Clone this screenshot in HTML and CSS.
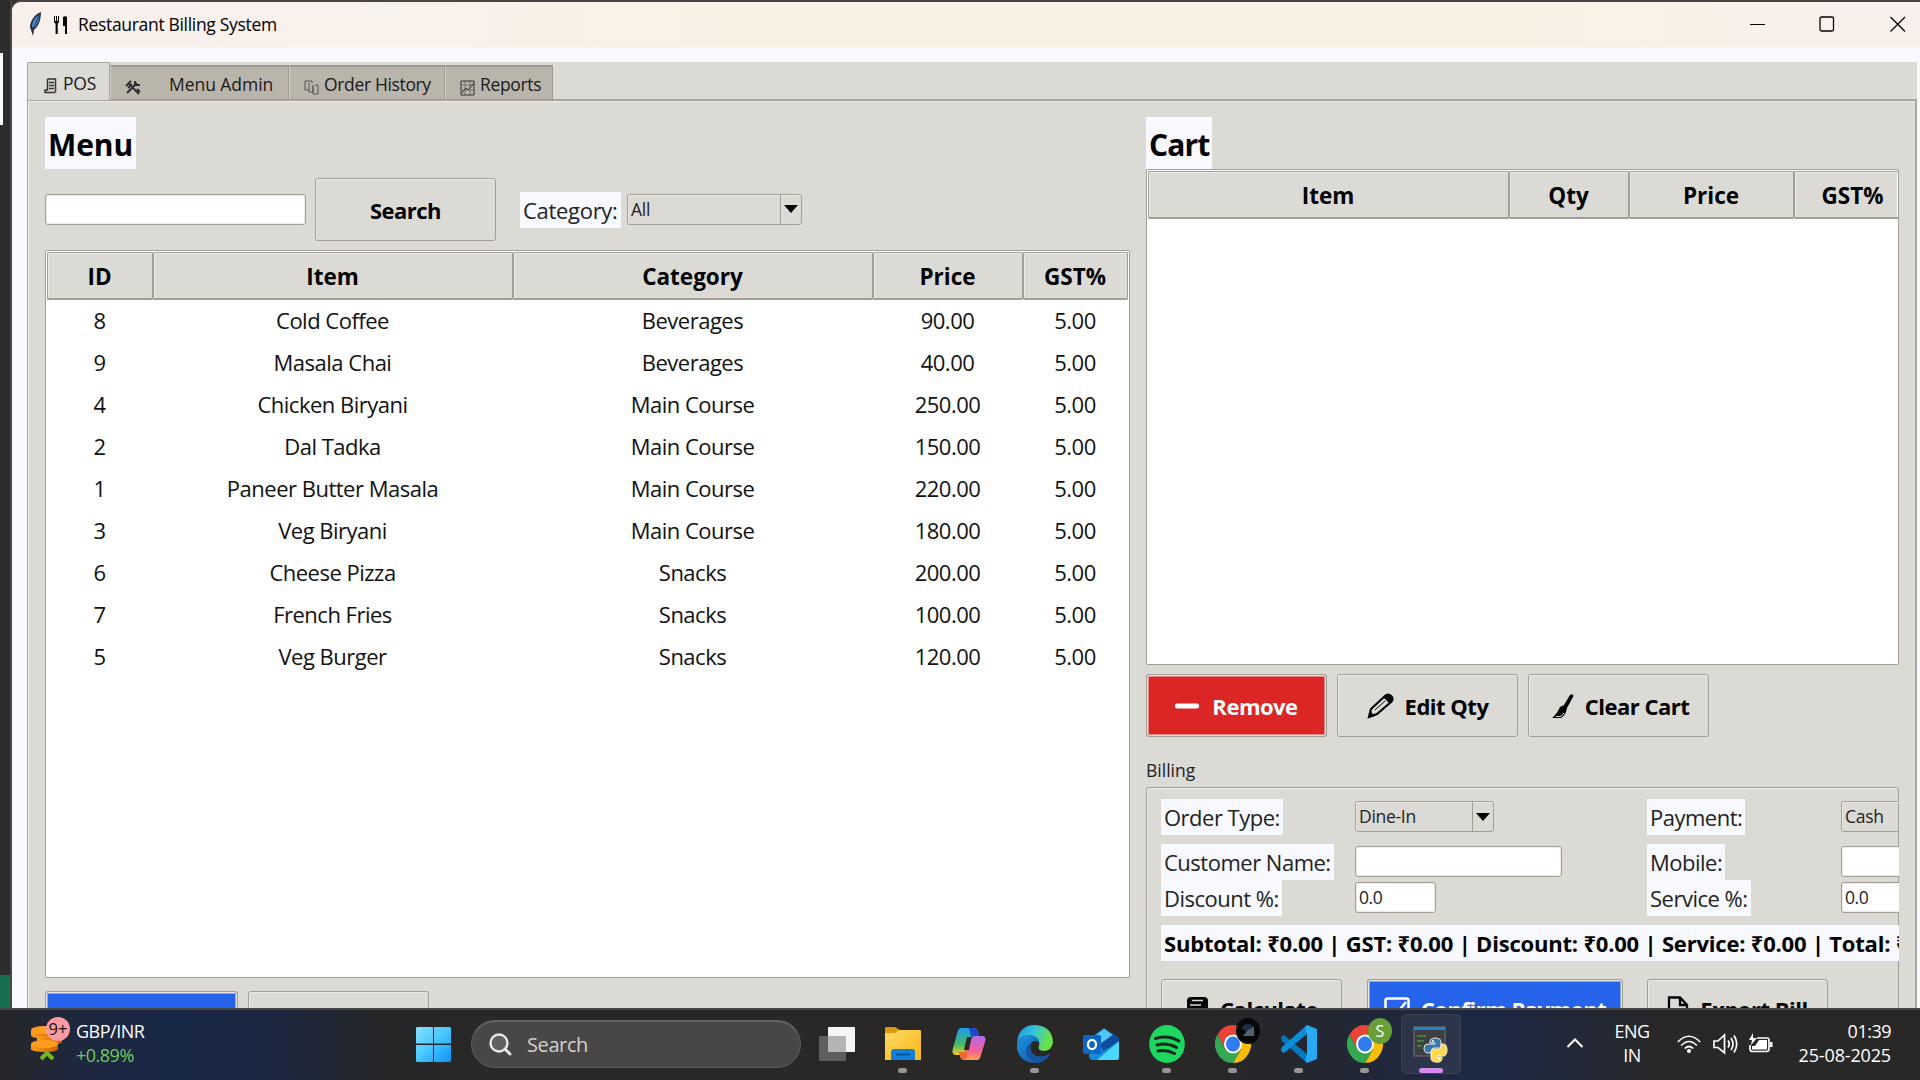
FILE: index.html
```html
<!DOCTYPE html>
<html lang="en">
<head>
<meta charset="utf-8">
<title>Restaurant Billing System</title>
<link rel="stylesheet" href="styles.css">
</head>
<body>
<svg width="0" height="0" class="defs">
  <defs>
    <symbol id="chrome" viewBox="0 0 36 38">
      <path d="M18 0A18 19 0 0 0 2.4 9.5L10 24 18 19 18 9.5H33.6A18 19 0 0 0 18 0Z" fill="#ea4335"/>
      <path d="M33.6 9.5H18L26 24 18 38A18 19 0 0 0 33.6 9.5Z" fill="#fbbc05"/>
      <path d="M2.4 9.5A18 19 0 0 0 18 38L26 24 18 28.5 10 24Z" fill="#34a853"/>
      <ellipse cx="18" cy="19" rx="9" ry="9.5" fill="#fff"/>
      <ellipse cx="18" cy="19" rx="7" ry="7.5" fill="#2f7bf0"/>
    </symbol>
  </defs>
</svg>
<div class="desktop">
  <div class="strip"><i class="strip-light"></i><i class="strip-green"></i></div>
  <div class="window">
    <header class="titlebar">
      <svg class="feather" width="14" height="24" viewBox="0 0 14 24"><path d="M13 0C7 2 2 9 2 15L3 18 5 24 6 18C11 14 13 7 13 0Z" fill="#26313f"/><path d="M11.500 2.500C7 5 4 10 4 15L6 16C10 12 11 7 11.500 2.500Z" fill="#4c8ede"/><path d="M11 3 5 17" stroke="#173a66" fill="none"/></svg>
      <svg class="cutlery" width="14" height="18" viewBox="0 0 14 18"><path d="M0 0H1V5H2V0H3V5H4V0H5V6L3.700 8V18H1.600V8L0 6ZM9 1C10 0 12 0 13 1V18H11V10H9Z" fill="#000"/></svg>
      <span class="title">Restaurant Billing System</span>
      <svg class="winbtns" width="160" height="17" viewBox="0 0 160 17" fill="none" stroke="#000" stroke-width="1.300"><path d="M2 8.500H17" stroke-width="1"/><rect x="72" y="1" width="13.500" height="14" rx="1.500"/><path d="M142.500 1 157 15.500M157 1 142.500 15.500"/></svg>
    </header>
    <div class="notebook">
      <nav class="tabs">
        <div class="tab active"><svg width="14" height="16" viewBox="0 0 14 16" fill="none" stroke="#333" stroke-width="1.500"><path d="M3.500 1H11.500V14M3.500 1V12H1V14.500H11.500M5 4.500H10M5 7.500H10M5 10.500H10"/></svg><span>POS</span></div>
        <div class="tab t-admin"><svg width="16" height="15" viewBox="0 0 16 15" fill="none" stroke="#2a2a2a" stroke-width="1.800"><path d="M2 13 12 3M4 4 14 14M1 6 6 1M3 8 7 4M10 1V5H15M12 9 15 12"/></svg><span>Menu Admin</span></div>
        <div class="tab t-history"><svg width="15" height="15" viewBox="0 0 15 15" fill="none" stroke="#555"><path d="M5 10H1V1H8V3M5 3V12H9V6M9 5V14H14V5H11"/></svg><span>Order History</span></div>
        <div class="tab t-reports"><svg width="15" height="16" viewBox="0 0 15 16" fill="none" stroke="#333"><path d="M1 5H14M1 10H14M5 1V15M10 1V15" opacity=".45"/><path d="M1 1H14V15H1ZM2 13 6 8 8 10 14 3"/></svg><span>Reports</span></div>
      </nav>
      <div class="pane">
        <section class="menu">
          <h2 class="lbl">Menu</h2>
          <div class="search-row">
            <div class="entry w-search"></div>
            <div class="btn">Search</div>
            <span class="lbl text cat">Category:</span>
            <div class="combo w-cat"><span>All</span><i></i></div>
          </div>
          <div class="tree menu-tree">
            <div class="row head"><b>ID</b><b>Item</b><b>Category</b><b>Price</b><b>GST%</b></div>
            <div class="row"><span>8</span><span>Cold Coffee</span><span>Beverages</span><span>90.00</span><span>5.00</span></div>
            <div class="row"><span>9</span><span>Masala Chai</span><span>Beverages</span><span>40.00</span><span>5.00</span></div>
            <div class="row"><span>4</span><span>Chicken Biryani</span><span>Main Course</span><span>250.00</span><span>5.00</span></div>
            <div class="row"><span>2</span><span>Dal Tadka</span><span>Main Course</span><span>150.00</span><span>5.00</span></div>
            <div class="row"><span>1</span><span>Paneer Butter Masala</span><span>Main Course</span><span>220.00</span><span>5.00</span></div>
            <div class="row"><span>3</span><span>Veg Biryani</span><span>Main Course</span><span>180.00</span><span>5.00</span></div>
            <div class="row"><span>6</span><span>Cheese Pizza</span><span>Snacks</span><span>200.00</span><span>5.00</span></div>
            <div class="row"><span>7</span><span>French Fries</span><span>Snacks</span><span>100.00</span><span>5.00</span></div>
            <div class="row"><span>5</span><span>Veg Burger</span><span>Snacks</span><span>120.00</span><span>5.00</span></div>
          </div>
          <div class="btn-row under-menu"><div class="btn blue w-add"></div><div class="btn"></div></div>
        </section>
        <section class="cart">
          <h2 class="lbl">Cart</h2>
          <div class="tree cart-tree"><div class="row head"><b>Item</b><b>Qty</b><b>Price</b><b>GST%</b></div></div>
          <div class="btn-row">
            <div class="btn red"><svg width="24" height="6" viewBox="0 0 24 6"><rect width="24" height="5" y=".5" rx="2" fill="#fff"/></svg>Remove</div>
            <div class="btn"><svg width="27" height="26" viewBox="0 0 27 26"><path d="M2 24 4 16 18 3Q21 0 24 3 27 6 24 9L10 21Z" fill="none" stroke="#000" stroke-width="2.200"/><path d="M16 4Q21-1 25 3 28 7 23 11ZM1 25 3 18 8 23Z"/><path d="M8 17 18 8" stroke="#000"/></svg>Edit Qty</div>
            <div class="btn clear"><svg width="22" height="24" viewBox="0 0 22 24"><path d="M18 1Q21-1 21.500 2L15 14Q14 21 9 24H0Q5 20 8 13L12 11Z"/><path d="M4 22.500H9L12 19" stroke="#ddd" fill="none"/></svg>Clear Cart</div>
          </div>
          <div class="billing-title">Billing</div>
          <div class="billing">
            <div class="form">
              <span class="lbl text">Order Type:</span><div class="combo w-type"><span>Dine-In</span><i></i></div><span class="lbl text">Payment:</span><div class="combo w-cut"><span>Cash</span></div>
              <span class="lbl text">Customer Name:</span><div class="entry w-name"></div><span class="lbl text">Mobile:</span><div class="entry w-cut"></div>
              <span class="lbl text">Discount %:</span><div class="entry w-disc">0.0</div><span class="lbl text">Service %:</span><div class="entry w-cut">0.0</div>
            </div>
            <div class="lbl summary">Subtotal: ₹0.00 | GST: ₹0.00 | Discount: ₹0.00 | Service: ₹0.00 | Total: ₹0.00</div>
            <div class="actions">
              <div class="btn"><svg width="24" height="26" viewBox="0 0 24 26"><rect x="2" y="1" width="21" height="23" rx="4"/><path d="M7 4.500H18M5 9H16" stroke="#dcdad5" stroke-width="1.500"/></svg>Calculate</div>
              <div class="btn blue w-confirm"><svg width="26" height="24" viewBox="0 0 26 24" fill="none" stroke="#fff" stroke-width="2.500"><rect x="1.500" y="1.500" width="23" height="20" rx="2"/><path d="M7 12 12 17 22 5"/></svg>Confirm Payment</div>
              <div class="btn"><svg width="22" height="26" viewBox="0 0 22 26" fill="none" stroke="#000" stroke-width="2.300"><path d="M2 1.500H13L20 9V24H2ZM13 2V9H20"/></svg>Export Bill</div>
            </div>
          </div>
        </section>
      </div>
    </div>
  </div>

  <footer class="taskbar">
    <div class="widget">
      <svg width="42" height="46" viewBox="0 0 42 46">
        <defs><linearGradient id="coin"><stop offset="0" stop-color="#ff9a1c"/><stop offset="1" stop-color="#c96400"/></linearGradient></defs>
        <g fill="url(#coin)"><path d="M1 14V19C1 24 27 24 27 19V14Z"/><path d="M7 20V26C9 30 30 30 32 26V20Z"/><path d="M1 28V33C1 37 28 37 28 33V28Z"/></g>
        <g fill="#ff9d20"><ellipse cx="14" cy="14" rx="13" ry="4"/><ellipse cx="14.500" cy="28" rx="13.500" ry="4"/></g>
        <path d="M11 43 17 37 23 43" fill="none" stroke="#7ab51d" stroke-width="4"/>
        <circle cx="28" cy="13" r="12" fill="#ff99a4"/><text x="28" y="18.500" text-anchor="middle" class="badge">9+</text>
      </svg>
      <div class="rate"><span>GBP/INR</span><span class="up">+0.89%</span></div>
    </div>
    <svg class="start" width="35" height="35" viewBox="0 0 35 35"><defs><linearGradient id="win" x2="1" y2="1"><stop offset="0" stop-color="#8be0ff"/><stop offset=".5" stop-color="#46c7ff"/><stop offset="1" stop-color="#0a93f8"/></linearGradient></defs><path d="M1 0H17V16.500H0V1ZM18 0H34L35 1V16.500H18ZM0 18H17V35H1L0 34ZM18 18H35V34L34 35H18Z" fill="url(#win)"/></svg>
    <div class="search"><svg width="23" height="23" viewBox="0 0 23 23" fill="none" stroke="#e6e8ec" stroke-width="2.400"><circle cx="10" cy="10" r="8.500" fill="#62615f"/><path d="M16 16 21 21" stroke-width="3" stroke-linecap="round"/></svg><span>Search</span></div>
    <div class="apps">
      <div class="app"><svg width="36" height="34" viewBox="0 0 36 34"><rect x="9" width="27" height="25" rx="1" fill="#f6f6f6"/><rect y="9" width="27" height="25" rx="1" fill="#5d5d5d"/><path d="M9 9H27V25H9Z" fill="#b4b4b4"/></svg></div>
      <div class="app run"><svg width="36" height="36" viewBox="0 0 36 36"><defs><linearGradient id="fold" x2="1" y2="1"><stop offset="0" stop-color="#ffd868"/><stop offset="1" stop-color="#fbb812"/></linearGradient></defs><path d="M0 3Q0 1 1 1H10L15 4 10 10H0Z" fill="#dc9a0a"/><path d="M0 7H10L14 4H35Q36 4 36 5V34H0Z" fill="url(#fold)"/><path d="M6 34V26Q6 23 9 23H27Q30 23 30 26V34Z" fill="#1180d6"/><path d="M11 28.500H25" stroke="#0b559e" stroke-width="2"/></svg></div>
      <div class="app"><svg width="36" height="34" viewBox="0 0 36 34"><defs><linearGradient id="cpa" x2="0" y2="1"><stop offset="0" stop-color="#1b9bee"/><stop offset=".6" stop-color="#45b866"/><stop offset="1" stop-color="#f3cf28"/></linearGradient><linearGradient id="cpb" x2="0" y2="1"><stop offset="0" stop-color="#b269e8"/><stop offset=".6" stop-color="#f3609c"/><stop offset="1" stop-color="#ffa04d"/></linearGradient></defs><path d="M10 1H23Q26 1 27 5L28 9H24Q21 9 20 12L16 24Q15 28 11 28H5Q0 28 2 21L6 7Q7 1 10 1Z" fill="url(#cpa)"/><path d="M17 1H23Q26 1 27 5L28 9H24Q21 9 20 11Q19 1 17 1Z" fill="#1d49c8"/><path d="M26 33H13Q10 33 9 29L8 25H12Q15 25 16 22L20 13Q21 9 24 9H31Q36 9 34 15L30 28Q29 33 26 33Z" fill="url(#cpb)"/><path d="M8 25H12Q15 25 16 22 17 32 13 33 10 33 9 29Z" fill="#f5682f"/><path d="M16 10H20.500L18 23H13Z" fill="#292826"/></svg></div>
      <div class="app run"><svg width="36" height="38" viewBox="0 0 36 38"><defs><linearGradient id="eg" x1="0" x2="1" y2=".3"><stop offset="0" stop-color="#1c8fdb"/><stop offset=".5" stop-color="#35c4dd"/><stop offset="1" stop-color="#6ae33f"/></linearGradient><linearGradient id="eb" x2="1" y2="1"><stop offset="0" stop-color="#1c96e4"/><stop offset="1" stop-color="#124b98"/></linearGradient></defs><path d="M0 17Q2 0 18 0 35 1 36 17 35 26 26 26 20 25 22 21 24 14 16 11 6 9 0 17Z" fill="url(#eg)"/><path d="M0 17Q6 9 14 10 23 12 22 18 19 14 15 17 11 23 16 29 22 35 33 29 28 38 17 38 3 37 0 24Z" fill="url(#eb)"/><path d="M15 17Q10 24 16 29 22 34 33 29 29 36 22 38 10 36 9 27 9 20 15 17Z" fill="#15569f"/></svg></div>
      <div class="app"><svg width="36" height="34" viewBox="0 0 36 34"><path d="M6 12 21 1 36 12V30Q36 33 33 33H10Q6 33 6 29Z" fill="#168bdc"/><path d="M12 9 21 2 30 8 18 17Z" fill="#4fc6f6"/><path d="M17 17 31 7 36 11V15L20 24Z" fill="#0b4c9e"/><path d="M36 14V30Q36 33 33 33H14Z" fill="#49d7fb"/><rect y="8" width="18" height="19" rx="2" fill="#0b66c5"/><ellipse cx="9" cy="17.500" rx="4" ry="4.700" fill="none" stroke="#fff" stroke-width="2.200"/></svg></div>
      <div class="app run"><svg width="36" height="38" viewBox="0 0 36 38"><ellipse cx="18" cy="19" rx="17.800" ry="19" fill="#1ed760"/><path d="M6.500 13.500Q19 9.500 30 16M8 20Q18 17 27.500 22.500M9 26Q17 24 25.500 28.500" fill="none" stroke="#15291b" stroke-width="3" stroke-linecap="round"/></svg></div>
      <div class="app run"><svg width="36" height="38"><use href="#chrome"/></svg><svg class="over" width="24" height="26" viewBox="0 0 24 26"><ellipse cx="12" cy="13" rx="12" ry="13" fill="#050608"/><path d="M5 10Q12 2 18 9V18H6L12 15Z" fill="#1d2b47"/><path d="M12 12 18 9V18H7Z" fill="#59616f"/></svg></div>
      <div class="app run"><svg width="36" height="38" viewBox="0 0 36 38"><path d="M0 12 3 10 26 29V38L1 16Q0 14 0 12Z" fill="#0577bd"/><path d="M0 26 3 28 26 9V0L1 22Q0 24 0 26Z" fill="#0b8ed8"/><path d="M26 0 36 4V34L26 38 24 35 26 29V9L24 3Z" fill="#29a9f2"/></svg></div>
      <div class="app run"><svg width="36" height="38"><use href="#chrome"/></svg><svg class="over" width="24" height="26" viewBox="0 0 24 26"><ellipse cx="12" cy="13" rx="12" ry="13" fill="#689f38"/><text x="12" y="18.500" text-anchor="middle" class="initial">S</text></svg></div>
      <div class="app run current"><svg width="36" height="38" viewBox="0 0 36 38"><rect x="1" y="2" width="31" height="29" fill="#3d3f40" stroke="#707273"/><path d="M1 2H32V5H1Z" fill="#1989d3"/><path d="M4 11H13M4 16H11M4 21H9" stroke="#3c9a38" stroke-width="1.600"/><path d="M17 17Q17 13 22 13 28 13 28 17V23H20Q18 24 18 28H15Q11 28 11 23 11 19 15 19H22V18H17Z" fill="#3977a8" stroke="#e6ebef"/><path d="M28 19H30Q34 19 34 25 34 31 30 31H24V32H29V34Q28 38 23 37 18 37 18 33V27Q18 24 21 24H26Q28 24 28 21Z" fill="#ffd94c" stroke="#f5f0dc"/><circle cx="20" cy="16" r="1" fill="#fff"/><circle cx="26" cy="34" r="1" fill="#fff"/></svg></div>
    </div>
    <div class="tray">
      <svg class="chev" width="18" height="12" viewBox="0 0 18 12"><path d="M1.500 10 9 2.500 16.500 10" fill="none" stroke="#fff" stroke-width="2"/></svg>
      <div class="lang"><span>ENG</span><span>IN</span></div>
      <svg width="96" height="22" viewBox="0 0 96 22" fill="none" stroke="#fff" stroke-width="1.700"><path d="M.8 9Q12-2.500 23.200 9M4.200 12.500Q12 4.500 19.800 12.500M7.800 15.500Q12 11.500 16.200 15.500"/><circle cx="12" cy="18" r="2" fill="#fff" stroke="none"/><path d="M37 8H41L47.500 2V20L41 14.500H37ZM51 7.500Q53.500 11 51 14.500M54 5Q58 11 54 17M57 2.500Q62.500 11 57 19.500"/><path d="M80 5H90Q92 5 92 7V16Q92 18.500 89 18.500H76Q73 18.500 73 16V12"/><path d="M82 7H90V16.500H75V13H78ZM93 9H95.500V14H93ZM76 0 72 7H75L74 12 80 5H76Z" fill="#fff" stroke="none"/></svg>
      <div class="clock"><span>01:39</span><span class="date">25-08-2025</span></div>
    </div>
  </footer>
</div>
</body>
</html>
```
FILE: styles.css
```css
* { box-sizing: border-box; }
body { margin: 0; width: 1920px; height: 1080px; overflow: hidden; font-family: "Open Sans", "Noto Sans", sans-serif; color: #111; }
.defs { position: absolute; }
.desktop { width: 1920px; height: 1080px; display: grid; grid-template-columns: 12px 1908px; grid-template-rows: 1008px 72px; background: #2d2d2d; overflow: hidden; }
svg { display: block; flex: none; }

.strip { display: flex; flex-direction: column; padding-top: 53px; border-right: 1px solid #555; }
.strip-light { width: 3px; height: 72px; background: #fafafa; }
.strip-green { margin-top: 850px; height: 33px; background: #166f4e; }

.window { margin-top: 2px; height: 1006px; overflow: hidden; background: #f7f9fe; border-radius: 9px 0 0 0; box-shadow: 0 0 0 2px #4b4646; }
.titlebar { height: 45px; display: flex; align-items: center; padding-left: 17px; background: linear-gradient(90deg, #f9f0eb 0, #f9f1eb 20%, #faf1e5 40%, #faf1e5 78%, #f9f0eb 95%); }
.feather { margin-top: -2px; margin-left: -1px; }
.cutlery { margin-left: 12px; }
.title { margin-left: 10px; margin-top: -2px; font-size: 17.5px; letter-spacing: -.32px; color: #000; flex: 1; }
.winbtns { margin-right: 12px; margin-top: -1px; }

.notebook { margin: 15px 3px 0 15px; height: 960px; background: #dcdad5; }
.tabs { height: 38px; display: flex; align-items: flex-end; }
.tab { height: 35px; display: flex; align-items: center; background: #bab5ab; border: 1px solid #9e9a91; border-top-width: 2px; border-left-color: #d2cec6; font-size: 17.5px; letter-spacing: -.2px; color: #1a1a1a; padding-left: 14px; }
.tab svg { margin-top: 9px; }
.tab span { margin-left: 5px; margin-top: 2px; }
.tab.active { width: 83px; height: 38px; background: #dcdad5; border-color: #a9a59c; border-bottom: 0; border-top-width: 1px; padding-left: 16px; border-radius: 2px 2px 0 0; position: relative; z-index: 1; }
.tab.active span { margin-left: 5px; margin-top: 2px; }
.t-admin { width: 179px; }
.tab.t-admin span { margin-left: 28px; letter-spacing: -.05px; }
.t-history { width: 156px; letter-spacing: -.35px; }
.t-reports { width: 108px; letter-spacing: -.35px; }
.pane { margin-top: -1px; height: 930px; border: 1px solid #9e9a91; border-width: 2px 2px 0 1px; border-color: #aaa69d; box-shadow: inset 1px 1px #eeebe7; display: flex; padding: 16px 0 0 17px; }

.lbl { background: #f7f9fe; }
h2.lbl { margin: 0; width: max-content; height: 52px; padding: 4px 3px 0; font-size: 30px; line-height: 48px; letter-spacing: -.1px; color: #000; }
.cart h2.lbl { letter-spacing: -.9px; }
.text { width: max-content; height: 36px; padding: 0 3px; font-size: 22px; line-height: 36px; letter-spacing: -.5px; color: #222; }
.entry { height: 31px; background: #fff; border: 1.500px solid #a39f96; border-radius: 3px; box-shadow: inset 0 0 0 1px #efece8; font-size: 17.5px; line-height: 28px; padding-left: 3px; letter-spacing: -.4px; color: #222; }
.combo { height: 31px; border: 1.500px solid #a39f96; border-radius: 3px; box-shadow: inset 1px 1px #eeebe7; display: flex; font-size: 17.5px; line-height: 29px; padding-left: 3px; letter-spacing: -.3px; color: #222; }
.combo span { flex: 1; }
.combo i { width: 21px; border-left: 1px solid #a39f96; display: flex; align-items: center; justify-content: center; }
.combo i::before { content: ""; border: 7px solid transparent; border-top: 8px solid #000; border-bottom: 0; }
.btn { width: 181px; height: 63px; border: 1.500px solid #a39f96; border-radius: 3px; box-shadow: inset 1px 1px #eeebe7; display: flex; align-items: center; justify-content: center; font-size: 22px; font-weight: 700; letter-spacing: -.5px; color: #000; white-space: nowrap; }
.btn svg { margin-right: 11px; }
.btn.red, .btn.blue { box-shadow: inset 0 0 0 1.500px #e8e4df; color: #fff; }
.btn.red { background: #dc2626; }
.btn.blue { background: #2563eb; }
.btn-row { display: flex; gap: 10px; margin-top: 9px; }
.w-add { width: 193px; }

.menu { width: 1085px; }
.search-row { display: flex; align-items: center; height: 63px; margin-top: 9px; }
.w-search { width: 261px; margin-right: 9px; margin-top: -1px; }
.cat { margin-left: 24px; margin-right: 6px; width: 101px; letter-spacing: -.3px; }
.w-cat { width: 175px; margin-top: -1px; }
.tree { background: #fff; border: 1.500px solid #a39f96; border-radius: 2px; padding: 1px; overflow: hidden; }
.row { display: grid; height: 42px; }
.row > * { display: flex; align-items: center; justify-content: center; font-size: 22px; letter-spacing: -.5px; white-space: nowrap; padding: 0 1px 2px 0; }
.row.head { height: 48px; background: #dcdad5; }
.row.head > * { border: 1px solid #a39f96; border-bottom-width: 2px; border-radius: 2px; box-shadow: inset 1px 1px #eeebe7; font-size: 22.5px; font-weight: 700; letter-spacing: 0; color: #000; padding: 1px 1px 0 0; }
.menu-tree { margin-top: 9px; height: 728px; }
.menu-tree .row { grid-template-columns: 106px 360px 360px 150px 1fr; }
.menu-tree + .btn-row { margin-top: 13px; }

.cart { margin-left: 16px; width: 753px; overflow: hidden; }
.cart-tree { height: 496px; }
.cart-tree .row { grid-template-columns: 361px 120px 165px 118px; }
.red svg { margin-right: 13px; }
.clear { padding-left: 4px; }
.billing-title { margin-top: 21px; height: 24px; font-size: 17.5px; line-height: 24px; letter-spacing: 0; color: #222; }
.billing { margin-top: 5px; height: 240px; border: 1.500px solid #a39f96; border-radius: 3px; box-shadow: inset 1px 1px #eeebe7; padding: 11px 0 0 14px; width: 753px; }
.form { display: grid; grid-template-columns: 194px 292px 194px 59px; grid-template-rows: 45px 36px 36px; align-items: start; }
.form > .combo { margin-top: 2px; }
.form > .entry { margin-top: 2px; }
.w-type { width: 139px; }
.w-name { width: 207px; }
.w-disc { width: 81px; }
.w-cut { width: 120px; }
.summary { margin-top: 9px; width: 760px; height: 36px; padding-left: 3px; font-size: 22px; font-weight: 700; line-height: 36px; letter-spacing: -.2px; color: #000; white-space: nowrap; }
.actions { display: flex; margin-top: 18px; gap: 25px; }
.actions .btn { padding-bottom: 3px; }
.actions .w-confirm { width: 256px; margin-right: -1px; }

.taskbar { grid-column: 1 / 3; position: relative; display: flex; border-top: 2px solid #474645; background: linear-gradient(90deg, #262729 0, #1e273e 4%, #192847 9%, #1c2741 14%, #262729 20%, #292826 26%, #292826 62%, #242730 68%, #1d2843 76%, #1e2840 79%, #282828 87%, #292826 100%); color: #fff; font-size: 18px; }
.widget { flex: none; display: flex; width: 416px; padding: 6px 0 0 30px; gap: 4px; }
.badge { font-size: 16.5px; fill: #111; }
.rate, .lang, .clock { display: flex; flex-direction: column; line-height: 24px; letter-spacing: -.5px; }
.rate { padding-top: 3px; }
.up { color: #6ccb5f; }
.start { margin-top: 17px; }
.search { margin: 10px 0 0 20px; width: 330px; height: 48px; border-radius: 24px; background: #484745; border: 1px solid #5b5a58; border-top: 2px solid #656462; display: flex; align-items: center; padding-left: 17px; gap: 15px; font-size: 20px; letter-spacing: -.4px; color: #d2d1cf; }
.search span { margin-top: -1px; }
.apps { display: flex; margin-left: 6px; gap: 6px; margin-top: 4px; }
.app { width: 60px; height: 60px; position: relative; display: flex; align-items: center; justify-content: center; border-radius: 6px; }
.over { position: absolute; left: 33px; top: 4px; }
.run::after { content: ""; position: absolute; left: 25px; top: 54px; width: 9px; height: 5px; border-radius: 3px; background: #979695; }
.current { background: #2c3549; border: 1px solid #3b4356; }
.current::after { left: 17px; width: 24px; top: 53px; background: #d78df0; }
.initial { font-size: 16px; fill: #fff; }
.tray { margin-left: auto; display: flex; align-items: flex-start; padding-right: 29px; }
.chev { margin-top: 27px; }
.lang { margin: 9px 0 0 30px; width: 36px; align-items: center; }
.tray > svg:nth-of-type(2) { margin: 23px 0 0 27px; }
.clock { margin-top: 9px; width: 118px; align-items: flex-end; }
.date { letter-spacing: -.15px; }
```
